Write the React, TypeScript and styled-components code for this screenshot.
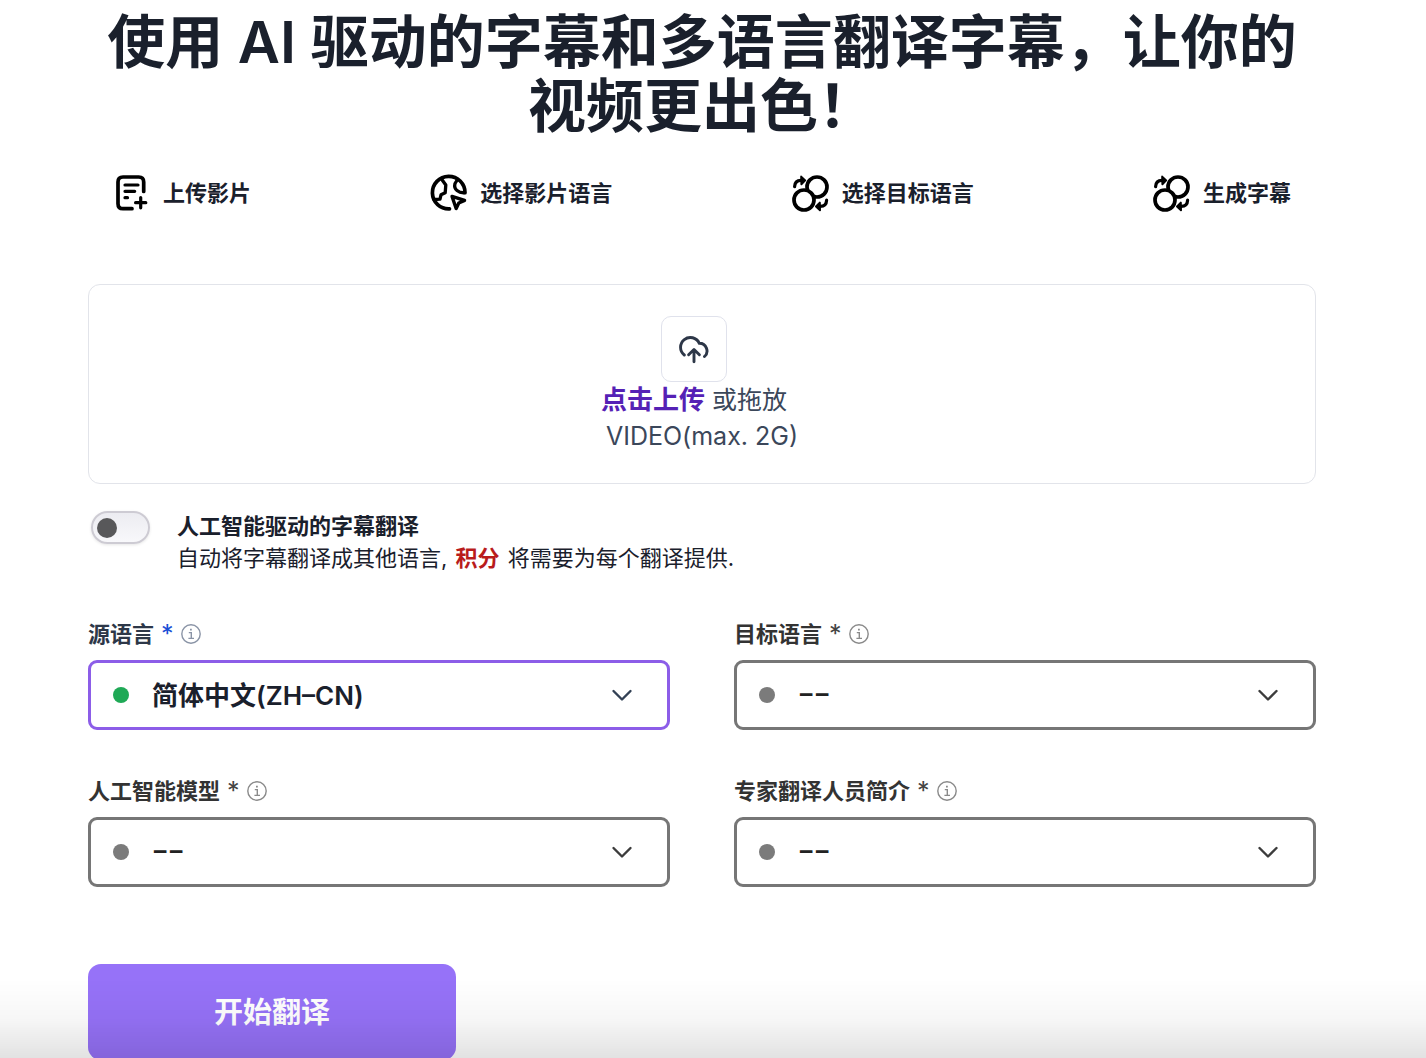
import React, { useState } from "react";
import styled, { createGlobalStyle } from "styled-components";

const GlobalStyle = createGlobalStyle`
  *, *::before, *::after { box-sizing: border-box; }
  body {
    margin: 0;
    background: #fff;
    color: #1a202c;
    font-family: Inter, "Noto Sans CJK SC", sans-serif;
    overflow-x: hidden;
  }
  button, select, input { font-family: inherit; }
`;

const Page = styled.main`
  padding: 10px 110px 0 88px;
`;

const Title = styled.h1`
  margin: 0;
  font-size: 58px;
  line-height: 64px;
  font-weight: 600;
  text-align: center;
  color: #1a202c;
`;

const Steps = styled.ol`
  display: flex;
  justify-content: space-between;
  list-style: none;
  margin: 36px 0 0;
  padding: 0 25px;
`;

const Step = styled.li`
  display: flex;
  align-items: center;
  gap: 12px;
  font-size: 22px;
  line-height: 38px;
  font-weight: 700;
`;

const StepIcon = styled.svg`
  width: 38px;
  height: 38px;
  fill: none;
  stroke: #000;
  stroke-width: 3.7;
  stroke-linecap: round;
  stroke-linejoin: round;
`;

const DropZone = styled.section`
  display: flex;
  flex-direction: column;
  align-items: center;
  margin-top: 72px;
  height: 200px;
  padding-top: 31px;
  border: 1px solid #e2e4ea;
  border-radius: 12px;
  font-size: 25px;
  line-height: 36px;
  color: #3b475a;
`;

const DropPrompt = styled.div`
  display: flex;
  flex-direction: column;
  align-items: center;
  margin-right: 16px;
`;

const UploadButton = styled.button`
  display: grid;
  place-items: center;
  width: 66px;
  height: 66px;
  padding: 0;
  border: 1px solid #e0e2ec;
  border-radius: 10px;
  background: #fff;
  cursor: pointer;
`;

const CloudIcon = styled.svg`
  width: 32px;
  height: 32px;
  fill: none;
  stroke: #2d3748;
  stroke-width: 2.9;
  stroke-linecap: round;
  stroke-linejoin: round;
`;

const DropText = styled.p`
  margin: 0;
`;

const UploadLink = styled.a`
  color: #5521b5;
  font-size: 26px;
  font-weight: 700;
  text-decoration: none;
`;

const ToggleRow = styled.div`
  display: flex;
  align-items: flex-start;
  gap: 27px;
  margin-top: 26px;
  padding-left: 3px;
`;

const Switch = styled.input`
  appearance: none;
  display: flex;
  align-items: center;
  width: 59px;
  height: 33px;
  margin: 1px 0 0;
  padding: 0 4px;
  border: 2px solid #cdcbd3;
  border-radius: 17px;
  background: linear-gradient(#ececf1, #f8f8fb);
  box-shadow: 0 1px 3px rgba(0, 0, 0, 0.1);
  cursor: pointer;

  &::before {
    content: "";
    width: 20px;
    height: 20px;
    border-radius: 50%;
    background: #58585a;
  }

  &:checked {
    justify-content: flex-end;
    background: #cdbcff;
  }
`;

const ToggleText = styled.div`
  font-size: 22px;
  line-height: 32px;
`;

const ToggleLabel = styled.label`
  display: block;
  font-weight: 700;
`;

const ToggleHint = styled.p`
  margin: 0;
`;

const Credits = styled.strong`
  color: #b91c1c;
  margin: 0 2px;
`;

const Fields = styled.div`
  display: grid;
  grid-template-columns: 1fr 1fr;
  column-gap: 64px;
  row-gap: 45px;
  margin-top: 44px;
`;

const FieldBox = styled.div`
  display: flex;
  flex-direction: column;
  gap: 10px;
`;

const FieldHead = styled.div<{ $active: boolean }>`
  display: flex;
  align-items: center;
  gap: 7px;
  height: 32px;
  font-size: 22px;
  line-height: 32px;
  color: ${(p) => (p.$active ? "#2d3748" : "#333")};
`;

const FieldLabel = styled.label`
  font-weight: 700;
`;

const Star = styled.span<{ $active: boolean }>`
  font-size: 25px;
  color: ${(p) => (p.$active ? "#1a4fd6" : "#444")};
`;

const InfoIcon = styled.svg<{ $active: boolean }>`
  width: 20px;
  height: 20px;
  fill: none;
  stroke: ${(p) => (p.$active ? "#8a94a6" : "#8a8a8a")};
  stroke-width: 1.4;
`;

const SelectWrap = styled.div`
  position: relative;
`;

const Dot = styled.span<{ $active: boolean }>`
  position: absolute;
  left: 25px;
  top: 27px;
  width: 16px;
  height: 16px;
  border-radius: 50%;
  background: ${(p) => (p.$active ? "#1fa956" : "#7b7b7b")};
  pointer-events: none;
`;

const Select = styled.select<{ $active: boolean }>`
  appearance: none;
  display: block;
  width: 100%;
  height: 70px;
  padding: 0 72px 0 61px;
  border: 3px solid ${(p) => (p.$active ? "#8c5de8" : "#767676")};
  border-radius: 9px;
  background: #fff;
  color: ${(p) => (p.$active ? "#1a202c" : "#222")};
  font-family: ${(p) => (p.$active ? "Inter" : "Roboto")}, "Noto Sans CJK SC", sans-serif;
  font-size: ${(p) => (p.$active ? "26px" : "25px")};
  font-weight: 600;
  outline: none;
`;

const Chevron = styled.svg<{ $active: boolean }>`
  position: absolute;
  right: 36px;
  top: 23px;
  width: 24px;
  height: 24px;
  fill: none;
  stroke: ${(p) => (p.$active ? "#334155" : "#3c3c3c")};
  stroke-width: 2.4;
  stroke-linecap: round;
  stroke-linejoin: round;
  pointer-events: none;
`;

const Submit = styled.button`
  display: block;
  width: 368px;
  max-width: 100%;
  height: 96px;
  margin-top: 77px;
  padding: 0 0 4px;
  border: 0;
  border-radius: 13px;
  background: #9672f8;
  color: #fff;
  font-size: 29px;
  font-weight: 700;
  cursor: pointer;
`;

const BottomFade = styled.div`
  position: fixed;
  left: 0;
  right: 0;
  bottom: 0;
  height: 80px;
  background: linear-gradient(rgba(0, 0, 0, 0), rgba(0, 0, 0, 0.03) 50%, rgba(0, 0, 0, 0.115));
  pointer-events: none;
`;

function DocumentPlus() {
  return (
    <StepIcon viewBox="0 0 38 38" aria-hidden="true">
      <path d="M19 34.7H10Q5 34.7 5 29.7V8Q5 3 10 3H25.7Q30.7 3 30.7 8V17.5" />
      <path d="M12 11H25M12 17.3H21.7M12 23.7H14.5M27.7 23.6V33.8M22.6 28.7H32.8" strokeWidth="3.2" />
    </StepIcon>
  );
}

function GlobeCursor() {
  return (
    <StepIcon viewBox="0 0 38 38" aria-hidden="true">
      <path d="M19.5 34.9A16.3 16.3 0 1 1 35 18.7" />
      <path d="M11.5 5L15.8 11L15.2 18.8L11 20.8L10 25.2L4 25.5" strokeWidth="3.3" />
      <path d="M27.5 5.5L25 9.5Q23.8 14 27 16.5Q30 19 34.5 18.7" strokeWidth="3.3" />
      <path d="M22 22.4L34.6 26.4L28.8 29L26.2 34.6Z" strokeWidth="3.3" />
    </StepIcon>
  );
}

function SwapCircles() {
  return (
    <StepIcon viewBox="0 0 38 38" aria-hidden="true">
      <circle cx="25" cy="13" r="10" />
      <circle cx="12" cy="26" r="10" fill="#fff" />
      <path d="M2.6 12.6Q2.8 6.6 9 6.4H11" strokeWidth="3.2" />
      <path d="M9.2 2.6L13.2 6.4L9.4 10.2Z" fill="#000" strokeWidth="2" />
      <path d="M34.6 26.2Q34.4 32.2 28.2 32.4H26" strokeWidth="3.2" />
      <path d="M28 36.2L24 32.4L27.8 28.6Z" fill="#000" strokeWidth="2" />
    </StepIcon>
  );
}

interface FieldProps {
  id: string;
  label: string;
  value: string;
  active?: boolean;
}

function Field({ id, label, value, active = false }: FieldProps) {
  return (
    <FieldBox>
      <FieldHead $active={active}>
        <FieldLabel htmlFor={id}>{label}</FieldLabel>
        <Star $active={active}>*</Star>
        <InfoIcon $active={active} viewBox="0 0 20 20" aria-hidden="true">
          <circle cx="10" cy="10" r="9.2" />
          <path d="M7.8 8.6H10.3V14.4M7.4 14.4H13" />
          <path d="M9 5.6H10.8" strokeWidth="1.8" />
        </InfoIcon>
      </FieldHead>
      <SelectWrap>
        <Select id={id} $active={active} defaultValue={value}>
          <option>{value}</option>
        </Select>
        <Dot $active={active} />
        <Chevron $active={active} viewBox="0 0 24 24" aria-hidden="true">
          <path d="M3.5 8L12 16.5L20.5 8" />
        </Chevron>
      </SelectWrap>
    </FieldBox>
  );
}

export default function App() {
  const [translate, setTranslate] = useState(false);

  return (
    <>
      <GlobalStyle />
      <Page>
        <Title>使用 AI 驱动的字幕和多语言翻译字幕，让你的视频更出色！</Title>

        <Steps>
          <Step><DocumentPlus />上传影片</Step>
          <Step><GlobeCursor />选择影片语言</Step>
          <Step><SwapCircles />选择目标语言</Step>
          <Step><SwapCircles />生成字幕</Step>
        </Steps>

        <DropZone>
          <DropPrompt>
            <UploadButton type="button" aria-label="上传">
              <CloudIcon viewBox="0 0 32 32" aria-hidden="true">
                <path d="M6.3 22A9.8 9.8 0 1 1 21.3 10.3A7.6 7.6 0 0 1 26.5 23.5" />
                <path d="M16 28.7V16.7M10.6 21.8L16 16.5L21.4 21.8" />
              </CloudIcon>
            </UploadButton>
            <DropText><UploadLink href="#upload">点击上传</UploadLink> 或拖放</DropText>
          </DropPrompt>
          <DropText>VIDEO(max. 2G)</DropText>
        </DropZone>

        <ToggleRow>
          <Switch
            id="translate"
            type="checkbox"
            role="switch"
            checked={translate}
            onChange={(e) => setTranslate(e.target.checked)}
          />
          <ToggleText>
            <ToggleLabel htmlFor="translate">人工智能驱动的字幕翻译</ToggleLabel>
            <ToggleHint>
              自动将字幕翻译成其他语言, <Credits>积分</Credits> 将需要为每个翻译提供.
            </ToggleHint>
          </ToggleText>
        </ToggleRow>

        <Fields>
          <Field id="source" label="源语言" value="简体中文(ZH–CN)" active />
          <Field id="target" label="目标语言" value="––" />
          <Field id="model" label="人工智能模型" value="––" />
          <Field id="profile" label="专家翻译人员简介" value="––" />
        </Fields>

        <Submit type="button">开始翻译</Submit>
      </Page>
      <BottomFade />
    </>
  );
}
